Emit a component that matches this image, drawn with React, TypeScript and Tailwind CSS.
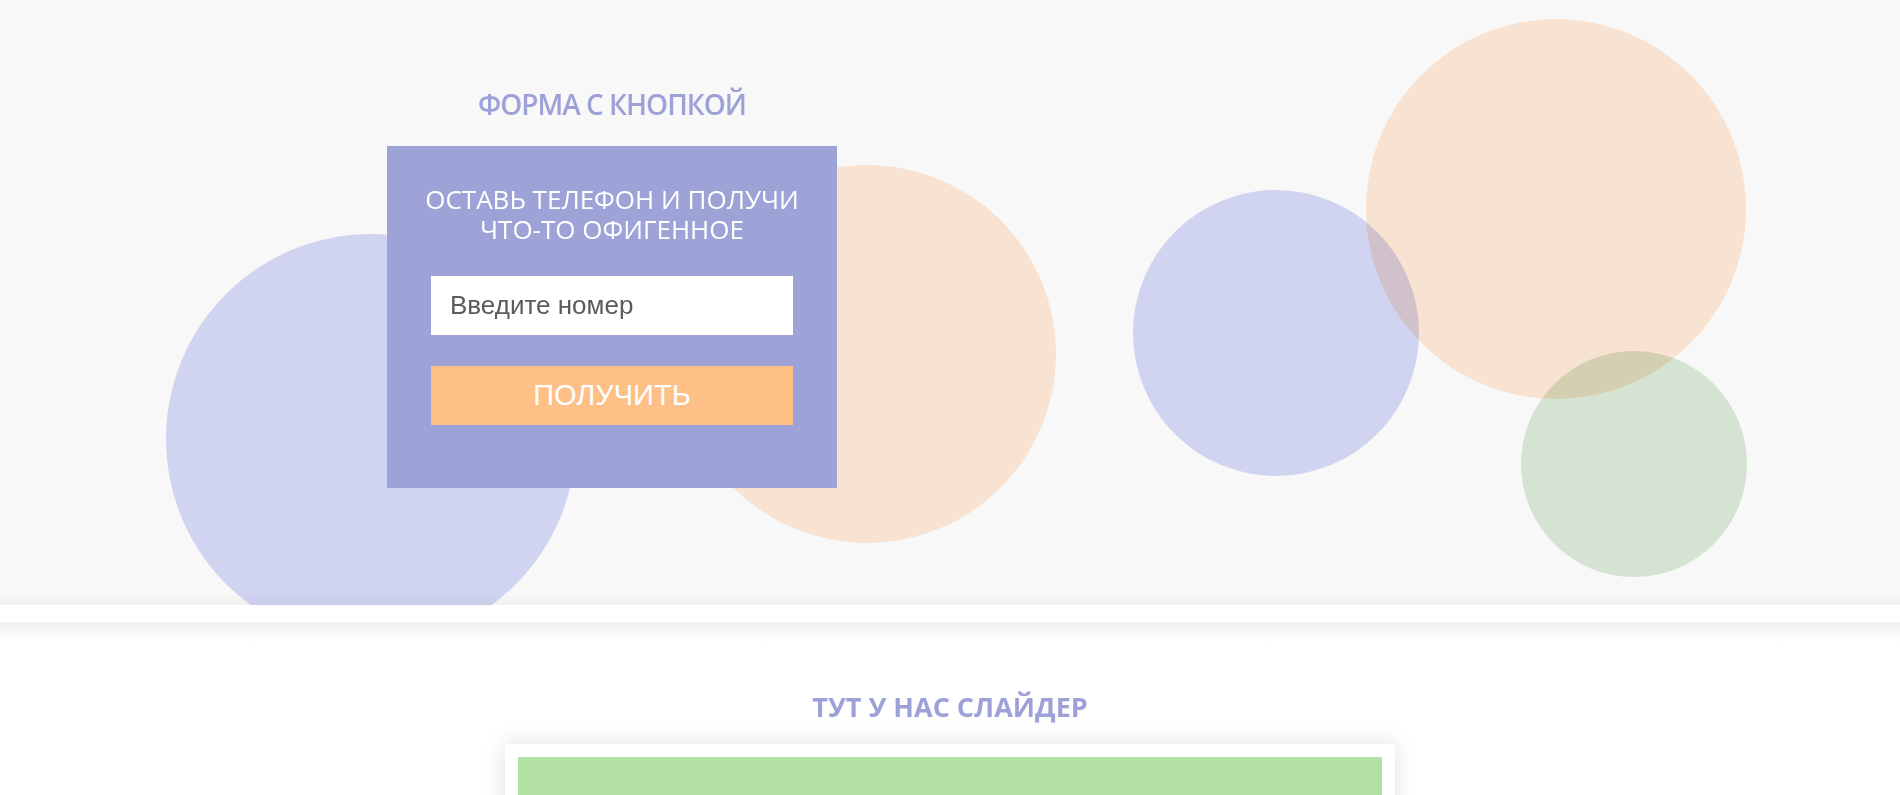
const circles = [
  { left: 166, top: 234, size: 410, color: "bg-[#d6daf8]" },
  { left: 678, top: 165, size: 378, color: "bg-[#ffe9d7]" },
  { left: 1133, top: 190, size: 286, color: "bg-[#d6daf8]" },
  { left: 1366, top: 19, size: 380, color: "bg-[#ffe9d7]" },
  { left: 1521, top: 351, size: 226, color: "bg-[#dbead8]" },
];

const App = () => {
  return (
    <div className="h-screen overflow-hidden bg-white font-['Open_Sans',sans-serif]">
      {/* форма с кнопкой */}
      <section className="relative h-[605px] overflow-hidden bg-[#f8f8f8] shadow-[inset_0_-14px_14px_-12px_rgba(0,0,0,0.06)]">
        {circles.map((c, i) => (
          <div
            key={i}
            className={`absolute rounded-full mix-blend-multiply ${c.color}`}
            style={{ left: c.left, top: c.top, width: c.size, height: c.size }}
          />
        ))}
        <div className="relative flex flex-col items-start pl-[387px] pt-[90px]">
          <h2 className="w-[450px] text-center text-[28px] leading-none font-semibold tracking-[-1px] text-[#9ca2d8]">
            ФОРМА С КНОПКОЙ
          </h2>
          <div className="mt-[28px] flex h-[342px] w-[450px] flex-col items-center bg-[#9da3d7] px-[44px] pt-[38px]">
            <p className="whitespace-nowrap text-center text-[26px] leading-[30px] text-white">
              <span className="block">ОСТАВЬ ТЕЛЕФОН И ПОЛУЧИ</span>
              <span className="block">ЧТО-ТО ОФИГЕННОЕ</span>
            </p>
            <input
              type="text"
              placeholder="Введите номер"
              className="mt-[32px] h-[59px] w-full bg-white pl-[19px] font-['Liberation_Sans',sans-serif] text-[26px] text-[#333] outline-none placeholder:text-[#5b5b5b]"
            />
            <button className="mt-[31px] h-[59px] w-full bg-[#ffc088] font-['Liberation_Sans',sans-serif] text-[29px] text-white">
              ПОЛУЧИТЬ
            </button>
          </div>
        </div>
      </section>

      <div className="h-[17px] bg-white" />

      {/* слайдер */}
      <section className="bg-[linear-gradient(#f1f1f1,#ffffff_20px)] pt-[71px]">
        <h2 className="text-center text-[27px] leading-none font-bold text-[#9ca2d8]">
          ТУТ У НАС СЛАЙДЕР
        </h2>
        <div className="mx-auto mt-[24px] w-[890px] bg-white p-[13px] shadow-[0_0_22px_rgba(0,0,0,0.13)]">
          <div className="h-[400px] bg-[#b2e0a5]" />
        </div>
      </section>
    </div>
  );
};

export default App;
